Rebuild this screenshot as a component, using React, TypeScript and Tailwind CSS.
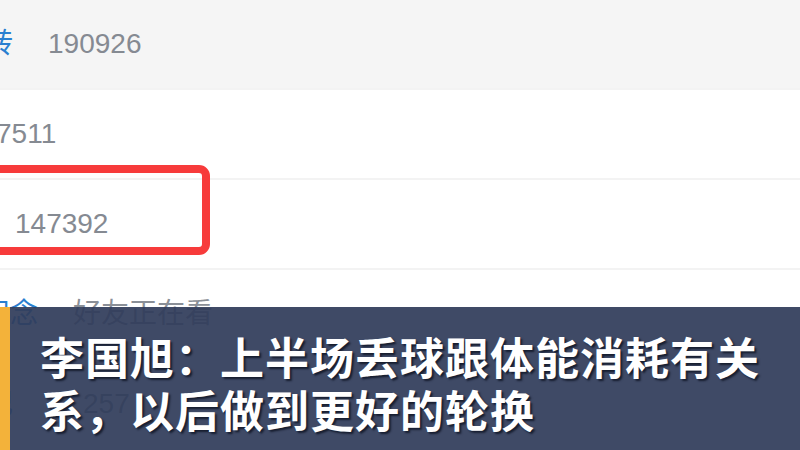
const cjk = "font-['Liberation_Sans','Noto_Sans_CJK_SC',sans-serif]";

type Row = {
  label?: string;
  value?: string;
  valueOffset?: string;
  extra?: string;
  bg?: string;
};

const rows: Row[] = [
  { label: '转', value: '190926', valueOffset: 'ml-[35px]', bg: 'bg-[#f5f5f5]' },
  { value: '7511', valueOffset: 'ml-[-4px]' },
  { value: '147392', valueOffset: 'ml-[15px]' },
  { label: '纪念', extra: '好友正在看' },
  { label: '纪', value: '257', valueOffset: 'ml-[70px]' },
];

function ListRow({ row }: { row: Row }) {
  return (
    <div
      className={`flex h-[90px] shrink-0 items-center border-b-2 border-[#f3f3f3] text-[28px] leading-none ${cjk} ${
        row.bg ?? 'bg-white'
      }`}
    >
      {row.label && (
        <span className={`text-[#2a7fd0] ${row.label.length > 1 ? 'ml-[-18px]' : 'ml-[-15px]'}`}>
          {row.label}
        </span>
      )}
      {row.value && <span className={`text-[#858a92] ${row.valueOffset}`}>{row.value}</span>}
      {row.extra && <span className="ml-[35px] text-[#8a8f97]">{row.extra}</span>}
    </div>
  );
}

export default function App() {
  return (
    <div className="relative h-[450px] w-[800px] overflow-hidden bg-white">
      <div className="flex flex-col">
        {rows.map((row, i) => (
          <ListRow key={i} row={row} />
        ))}
      </div>

      {/* highlight box around the third row */}
      <div className="absolute left-[-30px] top-[165px] h-[90px] w-[240px] rounded-[11px] border-[8px] border-[#f73b3b]" />

      {/* caption strip */}
      <div className="absolute bottom-0 left-0 flex h-[143px] w-full bg-[#303c5a]/[0.93]">
        <div className="w-[10px] bg-[#f3b23a]" />
        <div
          className="flex flex-col pl-[30px] pt-[23px] text-[44px] font-bold leading-[53px] tracking-[1px] text-white [text-shadow:2px_2px_2px_rgba(10,15,30,0.75)] font-['Noto_Sans_CJK_SC',sans-serif]"
        >
          <div>李国旭：上半场丢球跟体能消耗有关</div>
          <div>系，以后做到更好的轮换</div>
        </div>
      </div>
    </div>
  );
}
